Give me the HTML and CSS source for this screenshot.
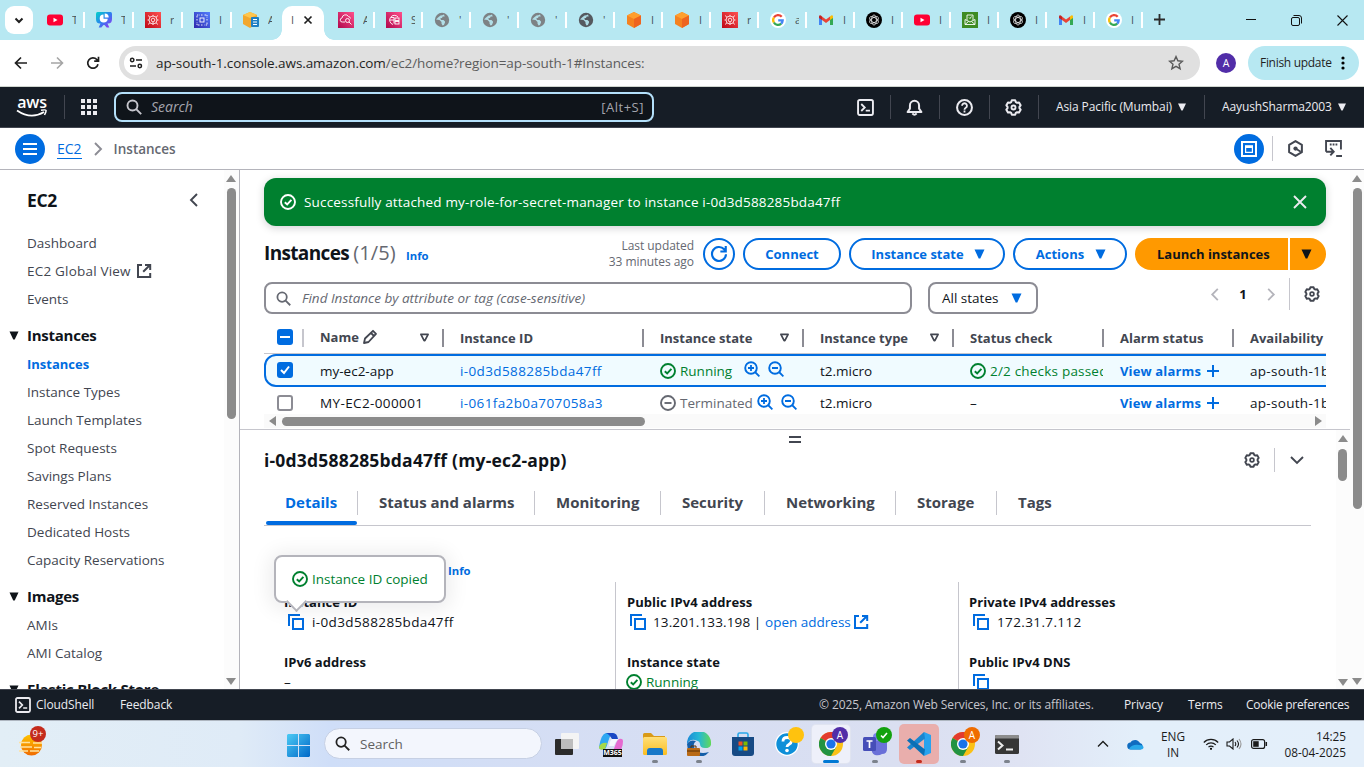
FILE: index.html
```html
<!DOCTYPE html>
<html lang="en">
<head>
<meta charset="utf-8">
<title>Instances | EC2 | ap-south-1</title>
<link rel="stylesheet" href="styles.css">
</head>
<body>
<svg class="sprite" aria-hidden="true">
  <defs>
    <linearGradient id="gRed" x1="0" y1="1" x2="1" y2="0"><stop offset="0" stop-color="#bd0816"/><stop offset="1" stop-color="#ff5252"/></linearGradient>
    <linearGradient id="gPink" x1="0" y1="1" x2="1" y2="0"><stop offset="0" stop-color="#b0084d"/><stop offset="1" stop-color="#ff4f8b"/></linearGradient>
    <linearGradient id="gBlue" x1="0" y1="1" x2="1" y2="0"><stop offset="0" stop-color="#2e27ad"/><stop offset="1" stop-color="#527fff"/></linearGradient>
    <linearGradient id="gTeal" x1="0" y1="0" x2="1" y2="1"><stop offset="0" stop-color="#00d4c8"/><stop offset=".5" stop-color="#2c7ff0"/><stop offset="1" stop-color="#a32cf0"/></linearGradient>
    <linearGradient id="gWin" x1="0" y1="0" x2="1" y2="1"><stop offset="0" stop-color="#4ccbf5"/><stop offset="1" stop-color="#0067c7"/></linearGradient>
    <linearGradient id="gFold" x1="0" y1="0" x2="0" y2="1"><stop offset="0" stop-color="#ffdf78"/><stop offset="1" stop-color="#fbbd20"/></linearGradient>
    <linearGradient id="gEdge" x1="0" y1="0" x2="1" y2="0"><stop offset="0" stop-color="#1b8ad8"/><stop offset=".5" stop-color="#26b8d4"/><stop offset="1" stop-color="#62d957"/></linearGradient>
    <linearGradient id="gSun" x1="0" y1="0" x2="0" y2="1"><stop offset="0" stop-color="#ffc400"/><stop offset="1" stop-color="#f06a00"/></linearGradient>
  </defs>
  <symbol id="yt" viewBox="0 0 16 16"><rect y="2.5" width="16" height="11" rx="3" fill="#ff0033"/><path d="M6.5 5.8v4.4l4-2.2z" fill="#fff"/></symbol>
  <symbol id="present" viewBox="0 0 16 16"><path d="M1.500 0h13Q16 0 16 2v5q0 4.500-4 4.500h-.5l1.800 4h-2.600L8.500 13h-1l-2.200 2.500H2.700l1.800-4H4Q0 11.500 0 7V2q0-2 1.500-2z" fill="url(#gTeal)"/><path d="M7.500 2.500a4 4 0 1 0 4.200 4.200H7.500z" fill="#fff"/><path d="M8.700 1.400a4 4 0 0 1 4 4h-4z" fill="#fff"/></symbol>
  <symbol id="redsvc" viewBox="0 0 16 16"><rect width="16" height="16" fill="url(#gRed)"/><g fill="none" stroke="#fff" stroke-width=".8"><circle cx="8" cy="8" r="4"/><circle cx="8" cy="8" r="1.8"/><path d="M3 3.500l2 1.700M13 3.500l-2 1.700M3 12.500l2-1.700M13 12.500l-2-1.700M2.500 8H4M12 8h1.500M8 2.800v1.500M8 10v3"/></g></symbol>
  <symbol id="bluesvc" viewBox="0 0 16 16"><rect width="16" height="16" fill="url(#gBlue)"/><g fill="none" stroke="#fff" stroke-width=".9"><rect x="6" y="6" width="4" height="4"/><path d="M3 5.500V3h2.500M10.500 3H13v2.500M13 10.500V13h-2.500M5.500 13H3v-2.500M3 7v2M13 7v2M7 3h2M7 13h2" stroke-dasharray="1.500 .7"/></g></symbol>
  <symbol id="box" viewBox="0 0 16 16"><path d="M0 3l7-3 7 3v9l-7 4-7-4z" fill="#f2a72e"/><path d="M0 3l7 3 7-3-7-3z" fill="#ffc64d"/><rect x="8" y="5" width="8" height="10" rx="1" fill="#1d7fc4"/><path d="M10 7.500h4M10 10h4M10 12.500h4" stroke="#fff" stroke-width="1.200"/></symbol>
  <symbol id="pink1" viewBox="0 0 16 16"><rect width="16" height="16" fill="url(#gPink)"/><g fill="none" stroke="#fff" stroke-width=".9"><path d="M7 10H4.500a2 2 0 0 1-.5-4 3.500 3.500 0 0 1 6.500-1.500q2 .5 2 2"/><circle cx="9.500" cy="8.500" r="2"/><path d="M11 10l2.500 2.500"/></g></symbol>
  <symbol id="pink2" viewBox="0 0 16 16"><rect width="16" height="16" fill="url(#gPink)"/><g fill="none" stroke="#fff" stroke-width=".9"><path d="M7 12.500A4.700 4.700 0 1 1 12 5M3.500 8H8M5 5.500h3v6"/><rect x="9" y="6" width="4" height="2.500"/><rect x="9" y="9.500" width="4" height="2.500"/></g></symbol>
  <symbol id="globe" viewBox="0 0 16 16"><circle cx="8" cy="8" r="7.200" fill="currentColor"/><path d="M2 7.500l3.500.5 2 2v1.500l1 2q2-.5 2.500-3V9.500L9.500 8H7L6.300 6.300 8 6l.7-1.500h2L10 2.600q-1.500.900-3.500.9L4 5.500z" fill="#b7e8f2" opacity=".9"/></symbol>
  <symbol id="cube" viewBox="0 0 16 16"><path d="M8 0l7 3.500v8.500L8 16l-7-4V3.500z" fill="#f58220"/><path d="M1 3.500L8 0l7 3.500L8 7z" fill="#ff9f2e"/><path d="M8 7l7-3.500V12l-7 4z" fill="#ee6420"/></symbol>
  <symbol id="google" viewBox="0 0 16 16"><circle cx="8" cy="8" r="8" fill="#fff"/><g fill="none" stroke-width="2.300"><path d="M11.700 4.700A4.800 4.800 0 0 0 3.900 5.500" stroke="#ea4335"/><path d="M3.900 5.500a4.800 4.800 0 0 0 0 5" stroke="#fbbc05"/><path d="M3.900 10.500a4.800 4.800 0 0 0 7.300 1.100" stroke="#34a853"/><path d="M11.200 11.600A4.500 4.500 0 0 0 12.700 8.300H8.200" stroke="#4285f4"/></g></symbol>
  <symbol id="gmail" viewBox="0 0 16 16"><path d="M1 4.500V13h3V7z" fill="#4285f4"/><path d="M15 4.500V13h-3V7z" fill="#34a853"/><path d="M4 4.500L8 7.500l4-3V8l-4 3-4-3z" fill="#ea4335"/><path d="M1 4.500Q1.500 2 4 4.500V8L1 6z" fill="#c5221f"/><path d="M15 4.500Q14.500 2 12 4.500V8l3-2z" fill="#fbbc04"/></symbol>
  <symbol id="gpt" viewBox="0 0 16 16"><circle cx="8" cy="8" r="8" fill="#000"/><g fill="none" stroke="#fff" stroke-width=".7"><ellipse cx="8" cy="8" rx="2.400" ry="5"/><ellipse cx="8" cy="8" rx="2.400" ry="5" transform="rotate(60 8 8)"/><ellipse cx="8" cy="8" rx="2.400" ry="5" transform="rotate(120 8 8)"/></g></symbol>
  <symbol id="greensvc" viewBox="0 0 16 16"><rect width="16" height="16" fill="#3f8b24"/><g fill="none" stroke="#fff" stroke-width=".9"><path d="M5 8V3h6v5M7 5.500l1 1 1.500-2M3 7.500L8 10l5-2.500v5H3zM3 12.500L6.500 9.500M13 12.500L9.500 9.500"/></g></symbol>
  <symbol id="gear" viewBox="0 0 16 16"><path d="M6.400 1.200h3.200l.6 1.700 1.200.7 1.800-.4 1.500 2.700-1.100 1.400v1.400l1.100 1.400-1.500 2.700-1.800-.4-1.200.7-.6 1.700H6.400l-.6-1.700-1.200-.7-1.800.4-1.500-2.700 1.100-1.400V7.300L1.300 5.900l1.500-2.700 1.800.4 1.200-.7z" fill="none" stroke="currentColor" stroke-width="1.900" stroke-linejoin="round"/><circle cx="8" cy="8" r="1.900" fill="none" stroke="currentColor" stroke-width="1.700"/></symbol>
  <symbol id="shell" viewBox="0 0 16 16"><rect x="1" y="1" width="14" height="14" rx="1.500" fill="none" stroke="currentColor" stroke-width="1.800"/><path d="M4 4.700L7.300 8 4 11.300M8.200 11h4" fill="none" stroke="currentColor" stroke-width="1.700"/></symbol>
  <symbol id="search" viewBox="0 0 16 16"><circle cx="6.500" cy="6.500" r="5" fill="none" stroke="currentColor" stroke-width="1.900"/><path d="M10.200 10.200l5 5" stroke="currentColor" stroke-width="1.900"/></symbol>
  <symbol id="ok" viewBox="0 0 16 16"><circle cx="8" cy="8" r="7" fill="none" stroke="currentColor" stroke-width="1.900"/><path d="M4.800 8.200l2.400 2.300 4.200-4.600" fill="none" stroke="currentColor" stroke-width="1.900"/></symbol>
  <symbol id="stopped" viewBox="0 0 16 16"><circle cx="8" cy="8" r="7" fill="none" stroke="currentColor" stroke-width="1.900"/><path d="M4.500 8h7" stroke="currentColor" stroke-width="1.900"/></symbol>
  <symbol id="zin" viewBox="0 0 16 16"><circle cx="7" cy="7" r="5.800" fill="none" stroke="currentColor" stroke-width="1.900"/><path d="M11 11l4.400 4.400M4 7h6M7 4v6" stroke="currentColor" stroke-width="1.800"/></symbol>
  <symbol id="zout" viewBox="0 0 16 16"><circle cx="7" cy="7" r="5.800" fill="none" stroke="currentColor" stroke-width="1.900"/><path d="M11 11l4.400 4.400M4 7h6" stroke="currentColor" stroke-width="1.800"/></symbol>
  <symbol id="tri" viewBox="0 0 10 10"><path d="M0 .5h10L5.800 9.500H4.200z" fill="currentColor"/></symbol>
  <symbol id="trio" viewBox="0 0 11 10"><path d="M1.500 1.500h8L5.900 8.500h-.8z" fill="none" stroke="currentColor" stroke-width="1.900" stroke-linejoin="round"/></symbol>
  <symbol id="left" viewBox="0 0 10 16"><path d="M8 2L2 8l6 6" fill="none" stroke="currentColor" stroke-width="1.900"/></symbol>
  <symbol id="right" viewBox="0 0 10 16"><path d="M2 2l6 6-6 6" fill="none" stroke="currentColor" stroke-width="1.900"/></symbol>
  <symbol id="ext" viewBox="0 0 16 16"><path d="M6 1.900H2v12.200h12.200V10M9 1.900h5.200V7M14 2L7.200 8.800" fill="none" stroke="currentColor" stroke-width="2"/></symbol>
  <symbol id="copy" viewBox="0 0 16 16"><path d="M1 12V1h11M5 5h10v10H5z" fill="none" stroke="currentColor" stroke-width="2"/></symbol>
  <symbol id="plus" viewBox="0 0 12 12"><path d="M6 0v12M0 6h12" stroke="currentColor" stroke-width="2"/></symbol>
  <symbol id="chrome" viewBox="0 0 24 24"><circle cx="12" cy="12" r="12" fill="#fbc116"/><path d="M12 12L1.600 6A12 12 0 0 1 22.400 6H12z" fill="#e33b2e"/><path d="M1.600 6A12 12 0 0 0 12 24l5.200-9L12 12z" fill="#229342"/><circle cx="12" cy="12" r="6" fill="#fff"/><circle cx="12" cy="12" r="4.600" fill="#1a73e8"/></symbol>
</svg>

<div class="tabs">
  <div class="tabsearch"><svg width="10" height="7" viewBox="0 0 10 7"><path d="M1.500 1.500L5 5l3.500-3.500" fill="none" stroke="#1f1f1f" stroke-width="2"/></svg></div>
  <div class="tab w49"><svg><use href="#yt"/></svg><span>T</span></div>
  <div class="tab w49"><svg><use href="#present"/></svg><span>T</span></div>
  <div class="tab w49"><svg><use href="#redsvc"/></svg><span>r</span></div>
  <div class="tab w49"><svg><use href="#bluesvc"/></svg><span>I</span></div>
  <div class="tab last"><svg><use href="#box"/></svg><span>A</span></div>
  <div class="tab-active"><span>I</span><svg width="10" height="10" viewBox="0 0 10 10"><path d="M1.500 1.500l7 7M8.500 1.500l-7 7" stroke="#1f1f1f" stroke-width="1.700"/></svg></div>
  <div class="tab first"><svg><use href="#pink1"/></svg><span>A</span></div>
  <div class="tab"><svg><use href="#pink2"/></svg><span>S</span></div>
  <div class="tab g1"><svg><use href="#globe"/></svg><span>'</span></div>
  <div class="tab g1"><svg><use href="#globe"/></svg><span>'</span></div>
  <div class="tab g1"><svg><use href="#globe"/></svg><span>'</span></div>
  <div class="tab g2"><svg><use href="#globe"/></svg><span>'</span></div>
  <div class="tab"><svg><use href="#cube"/></svg><span>I</span></div>
  <div class="tab"><svg><use href="#cube"/></svg><span>I</span></div>
  <div class="tab"><svg><use href="#redsvc"/></svg><span>r</span></div>
  <div class="tab"><svg><use href="#google"/></svg><span>a</span></div>
  <div class="tab"><svg><use href="#gmail"/></svg><span>I</span></div>
  <div class="tab"><svg><use href="#gpt"/></svg><span>I</span></div>
  <div class="tab"><svg><use href="#yt"/></svg><span>I</span></div>
  <div class="tab"><svg><use href="#greensvc"/></svg><span>I</span></div>
  <div class="tab"><svg><use href="#gpt"/></svg><span>I</span></div>
  <div class="tab"><svg><use href="#gmail"/></svg><span>I</span></div>
  <div class="tab"><svg><use href="#google"/></svg><span>I</span></div>
  <svg class="newtab" width="12" height="12"><use href="#plus"/></svg>
  <div class="winctl">
    <svg width="10" height="10" viewBox="0 0 10 10"><path d="M0 4.500h10" stroke="#111"/></svg>
    <svg width="11" height="11" viewBox="0 0 11 11"><rect x=".5" y="2.500" width="8" height="8" rx="1.500" fill="none" stroke="#111"/><path d="M2.500.5H8A2.500 2.500 0 0 1 10.500 3v5.500" fill="none" stroke="#111"/></svg>
    <svg width="11" height="11" viewBox="0 0 11 11"><path d="M.5.5l10 10M10.500.5l-10 10" stroke="#111" stroke-width="1.100"/></svg>
  </div>
</div>

<div class="toolbar">
  <svg class="nav-ic" viewBox="0 0 16 16"><path d="M14 8H3M8 2.500L2.500 8 8 13.500" fill="none" stroke="#1f1f1f" stroke-width="1.700"/></svg>
  <svg class="nav-ic" viewBox="0 0 16 16"><path d="M2 8h11M8 2.500L13.500 8 8 13.500" fill="none" stroke="#a5a5a5" stroke-width="1.600"/></svg>
  <svg class="nav-ic" viewBox="0 0 16 16"><path d="M13 9.200A5.200 5.200 0 1 1 11.800 4.500l1.200 1.300M13.500 1.800v4.400H9.200" fill="none" stroke="#1f1f1f" stroke-width="1.700"/></svg>
  <div class="omni">
    <div class="site"><svg width="14" height="12" viewBox="0 0 14 12"><g fill="none" stroke="#1f1f1f" stroke-width="1.500"><circle cx="3.200" cy="3" r="1.700"/><path d="M7 3h6M1 9h6"/><circle cx="10.800" cy="9" r="1.700"/></g></svg></div>
    <div class="url">ap-south-1.console.aws.amazon.com<span>/ec2/home?region=ap-south-1#Instances:</span></div>
    <svg class="star" viewBox="0 0 16 16"><path d="M8 1.600l1.900 4.200 4.600.4-3.500 3 1.100 4.500L8 11.300l-4.100 2.400L5 9.200l-3.500-3 4.600-.4z" fill="none" stroke="#5a5a5a" stroke-width="1.400"/></svg>
  </div>
  <div class="avatar">A</div>
  <div class="finish"><span>Finish update</span><svg width="4" height="14" viewBox="0 0 4 14"><circle cx="2" cy="2" r="1.600"/><circle cx="2" cy="7" r="1.600"/><circle cx="2" cy="12" r="1.600"/></svg></div>
</div>

<header class="aws">
  <div class="logo"><span>aws</span><svg width="32" height="9" viewBox="0 0 32 9"><path d="M1 1.500Q15 11 28 3" fill="none" stroke="#fff" stroke-width="1.700"/><path d="M25 1.300q4.500-.8 5 0t-1.500 4.700" fill="none" stroke="#fff" stroke-width="1.500"/></svg></div>
  <i class="vr"></i>
  <svg class="apps" viewBox="0 0 16 16"><path d="M0 0h4v4H0zM6 0h4v4H6zM12 0h4v4h-4zM0 6h4v4H0zM6 6h4v4H6zM12 6h4v4h-4zM0 12h4v4H0zM6 12h4v4H6zM12 12h4v4h-4z" fill="#ebebf0"/></svg>
  <div class="gsearch"><svg width="16" height="16"><use href="#search"/></svg><em>Search</em><b>[Alt+S]</b></div>
  <div class="gicons">
    <div><svg><use href="#shell"/></svg></div>
    <div><svg viewBox="0 0 16 16"><path d="M1.500 12.200h13L12.300 9V6a4.300 4.300 0 0 0-8.600 0v3zM6 13.500q2 2.500 4 0" fill="none" stroke="currentColor" stroke-width="1.900" stroke-linejoin="round"/></svg></div>
    <div><svg viewBox="0 0 16 16"><circle cx="8" cy="8" r="7" fill="none" stroke="currentColor" stroke-width="1.900"/><path d="M5.700 6.300a2.300 2.300 0 1 1 3.500 2q-1.200.7-1.200 1.700M8 10.900v1.700" fill="none" stroke="currentColor" stroke-width="1.700"/></svg></div>
    <div><svg><use href="#gear"/></svg></div>
  </div>
  <div class="region"><span>Asia Pacific (Mumbai)</span><svg><use href="#tri"/></svg></div>
  <div class="user"><span>AayushSharma2003</span><svg><use href="#tri"/></svg></div>
</header>

<nav class="crumbs">
  <div class="menu"><i></i><i></i><i></i></div>
  <a>EC2</a>
  <svg class="sep" viewBox="0 0 10 16"><use href="#right"/></svg>
  <b>Instances</b>
  <div class="cright">
    <div class="round"><svg width="16" height="16" viewBox="0 0 16 16"><path d="M1 1h14v14H1z" fill="none" stroke="#fff" stroke-width="2"/><path d="M4.600 5h6.800v6.400H4.600z" fill="none" stroke="#fff" stroke-width="1.200"/><path d="M4 4.400h8v2.600H4z" fill="#fff"/></svg></div>
    <i></i>
    <svg class="hex" viewBox="0 0 16 16"><path d="M8 1l6 3.500v7L8 15l-6-3.500v-7z" fill="none" stroke="#424650" stroke-width="1.900" stroke-linejoin="round"/><circle cx="8" cy="8" r="2" fill="#424650"/><path d="M8 8l5 3" stroke="#424650" stroke-width="1.700"/></svg>
    <svg class="term" viewBox="0 0 16 16"><path d="M1 11V1h14v8M4.500 4.300h1.700M7.200 4.300h1.700M9.900 4.300h1.700M1 11h6M5 7.500L8.200 11 5 14.500M10.500 15H16" fill="none" stroke="#424650" stroke-width="1.800"/></svg>
  </div>
</nav>

<div class="main">
  <aside>
    <div class="side">
      <div class="side-title"><b>EC2</b><svg width="10" height="16"><use href="#left"/></svg></div>
      <a>Dashboard</a>
      <a class="gv">EC2 Global View <svg width="16" height="16"><use href="#ext"/></svg></a>
      <a>Events</a>
      <h3><svg><use href="#tri"/></svg>Instances</h3>
      <a class="on">Instances</a>
      <a>Instance Types</a>
      <a>Launch Templates</a>
      <a>Spot Requests</a>
      <a>Savings Plans</a>
      <a>Reserved Instances</a>
      <a>Dedicated Hosts</a>
      <a>Capacity Reservations</a>
      <h3><svg><use href="#tri"/></svg>Images</h3>
      <a>AMIs</a>
      <a>AMI Catalog</a>
      <h3><svg><use href="#tri"/></svg>Elastic Block Store</h3>
    </div>
    <div class="vbar side-bar"><i class="up"></i><i class="thumb"></i><i class="down"></i></div>
  </aside>

  <div class="content">
    <section class="top">
      <div class="flash"><svg width="16" height="16"><use href="#ok"/></svg><span>Successfully attached my-role-for-secret-manager to instance i-0d3d588285bda47ff</span><svg width="14" height="14" viewBox="0 0 14 14"><path d="M1 1l12 12M13 1L1 13" stroke="#ebebf0" stroke-width="1.900"/></svg></div>
      <div class="title">
        <h1>Instances <span>(1/5)</span></h1><a class="info">Info</a>
        <div class="updated">Last updated<br>33 minutes ago</div>
        <div class="btn refresh"><svg width="18" height="18" viewBox="0 0 16 16"><path d="M14.200 8.200A6.200 6.200 0 1 1 12.600 3.800L14 5.500M14 .8v5H9.200" fill="none" stroke="#006ce0" stroke-width="1.900"/></svg></div>
        <div class="btn connect">Connect</div>
        <div class="btn state">Instance state<svg><use href="#tri"/></svg></div>
        <div class="btn actions">Actions<svg><use href="#tri"/></svg></div>
        <div class="launch">Launch instances</div><div class="launch-more"><svg><use href="#tri"/></svg></div>
      </div>
      <div class="filter">
        <div class="find"><svg width="15" height="15"><use href="#search"/></svg><em>Find Instance by attribute or tag (case-sensitive)</em></div>
        <div class="select"><span>All states</span><svg><use href="#tri"/></svg></div>
        <div class="pager"><svg width="10" height="16"><use href="#left"/></svg><b>1</b><svg width="10" height="16"><use href="#right"/></svg><i></i><svg class="g" width="16" height="16"><use href="#gear"/></svg></div>
      </div>
      <div class="table">
        <div class="row head">
          <div><span class="cb dash"></span></div>
          <div class="nm">Name <svg class="pen" viewBox="0 0 16 16"><path d="M2 14l1-4.500L11 1.800l3 3L6.500 13zM9 4l3 3" fill="none" stroke="currentColor" stroke-width="1.800" stroke-linejoin="round"/></svg><svg class="sort"><use href="#trio"/></svg></div>
          <div>Instance ID</div>
          <div>Instance state<svg class="sort"><use href="#trio"/></svg></div>
          <div>Instance type<svg class="sort"><use href="#trio"/></svg></div>
          <div>Status check</div>
          <div>Alarm status</div>
          <div>Availability Zone</div>
        </div>
        <div class="row sel">
          <div><span class="cb"><svg viewBox="0 0 16 16"><path d="M4 8l3 3 5-6.500" fill="none" stroke="#fff" stroke-width="2"/></svg></span></div>
          <div>my-ec2-app</div>
          <div class="link wide">i-0d3d588285bda47ff</div>
          <div class="green"><svg class="st"><use href="#ok"/></svg>Running<svg class="zm z1"><use href="#zin"/></svg><svg class="zm"><use href="#zout"/></svg></div>
          <div>t2.micro</div>
          <div class="green"><svg class="st"><use href="#ok"/></svg><span class="clip">2/2 checks passed</span></div>
          <div class="alarm">View alarms<svg><use href="#plus"/></svg></div>
          <div class="az">ap-south-1b</div>
        </div>
        <div class="row r2">
          <div><span class="cb off"></span></div>
          <div class="wide">MY-EC2-000001</div>
          <div class="link wide">i-061fa2b0a707058a3</div>
          <div class="grey"><svg class="st"><use href="#stopped"/></svg>Terminated<svg class="zm z2"><use href="#zin"/></svg><svg class="zm"><use href="#zout"/></svg></div>
          <div>t2.micro</div>
          <div>–</div>
          <div class="alarm">View alarms<svg><use href="#plus"/></svg></div>
          <div class="az">ap-south-1b</div>
        </div>
        <div class="hbar"><i class="lf"></i><i class="thumb"></i><i class="rt"></i></div>
      </div>
    </section>

    <section class="panel">
      <div class="panel-body">
        <div class="grip"><i></i><i></i></div>
        <div class="ptitle"><h2>i-0d3d588285bda47ff (my-ec2-app)</h2><svg width="16" height="16"><use href="#gear"/></svg><i></i><svg width="14" height="10" viewBox="0 0 14 10"><path d="M1 2l6 6 6-6" fill="none" stroke="currentColor" stroke-width="1.900"/></svg></div>
        <div class="ptabs">
          <div class="cur">Details</div><div class="t2">Status and alarms</div><div class="t3">Monitoring</div><div class="t4">Security</div><div class="t5">Networking</div><div class="t6">Storage</div><div class="t7">Tags</div>
        </div>
        <div class="summary"><a class="info">Info</a></div>
        <div class="grid">
          <div class="gcol">
            <b>Instance ID</b><p class="cp wide"><svg><use href="#copy"/></svg>i-0d3d588285bda47ff</p>
            <b>IPv6 address</b><p>–</p>
            <div class="pop"><svg width="16" height="16"><use href="#ok"/></svg>Instance ID copied</div>
          </div>
          <div class="gcol">
            <b>Public IPv4 address</b><p class="cp ip"><svg><use href="#copy"/></svg><span>13.201.133.198 |&nbsp;</span><a class="link">open address</a><svg class="ex"><use href="#ext"/></svg></p>
            <b>Instance state</b><p class="green run"><svg><use href="#ok"/></svg>Running</p>
          </div>
          <div class="gcol">
            <b>Private IPv4 addresses</b><p class="cp wide"><svg><use href="#copy"/></svg>172.31.7.112</p>
            <b>Public IPv4 DNS</b><p class="cp"><svg><use href="#copy"/></svg></p>
          </div>
        </div>
      </div>
      <div class="vbar panel-bar"><i class="up"></i><i class="thumb"></i><i class="down"></i></div>
    </section>
  </div>
  <div class="vbar page-bar"><i class="up"></i><i class="thumb"></i><i class="down"></i></div>
</div>

<footer>
  <svg width="16" height="16"><use href="#shell"/></svg><span class="f1">CloudShell</span><span>Feedback</span>
  <div class="fr"><span class="copyr">© 2025, Amazon Web Services, Inc. or its affiliates.</span><span class="f3">Privacy</span><span class="f4">Terms</span><span class="f5">Cookie preferences</span></div>
</footer>

<div class="taskbar">
  <div class="weather"><svg width="24" height="24" viewBox="0 0 24 24"><circle cx="12.500" cy="13" r="10.500" fill="url(#gSun)"/><path d="M0 10.500h11M1 15h12M0 19h9M14 11h9M15 15.500h7M11 19h9" stroke="#ffe2a0" stroke-width="1.500"/></svg><span>9+</span></div>
  <svg class="start" width="23" height="23" viewBox="0 0 23 23"><path d="M1 0h10v11H0V1zM12 0h10l1 1v10H12zM0 12h11v11H1l-1-1zM12 12h11v10l-1 1H12z" fill="url(#gWin)"/></svg>
  <div class="tsearch"><svg width="15" height="15"><use href="#search"/></svg><span>Search</span></div>
  <div class="apps-row">
    <div><svg width="24" height="22" viewBox="0 0 24 22"><rect x="0" y="6" width="18" height="16" rx="1" fill="#2b2b2b"/><rect x="6" y="0" width="18" height="16" rx="1" fill="#f4f4f4"/><rect x="6" y="6" width="12" height="10" fill="#bdbdbd"/></svg></div>
    <div><svg width="26" height="24" viewBox="0 0 26 24"><path d="M1 15Q3 2 8 1h8q-4 1-6 9t-4 7q-5 1-5-2z" fill="#2fa8f2"/><path d="M1 15q2-5 8-4l-2 6q-6 2-6-2z" fill="#a5d84a"/><path d="M8 1h7q4 0 5 6h-6q-3-5-6-6z" fill="#1a48c4"/><path d="M25 9q0 9-6 12h-7q3-1 5-7t4-7q4-1 4 2z" fill="#e56bd0"/><path d="M14 7h7q-3 1-5 7h-5q1-6 3-7z" fill="#fff" opacity=".75"/></svg><span class="m365">M365</span></div>
    <div class="dot"><svg width="24" height="22" viewBox="0 0 24 22"><path d="M0 1.500Q0 0 1.500 0H8l3 3h11v6H0z" fill="#d99a17"/><rect y="4" width="24" height="18" rx="1.500" fill="url(#gFold)"/><path d="M4 22v-4q0-3 3-3h10q3 0 3 3v4z" fill="#1878c8"/></svg></div>
    <div class="dot"><svg width="24" height="24" viewBox="0 0 24 24"><path d="M0 12A12 12 0 0 1 24 10q1 6-6 6-5 0-5-4 0-3-5-4T0 12z" fill="url(#gEdge)"/><path d="M0 12q3-5 9-3-4 3-1 8 4 6 14 3-5 6-12 4Q0 21 0 12z" fill="#145ea8"/><rect y="16" width="13" height="8" rx="1" fill="#b96a16"/><path d="M4 16v-2h5v2M0 19h13" stroke="#5a3005" fill="none"/></svg></div>
    <div><svg width="24" height="24" viewBox="0 0 24 24"><path d="M7 6V2.500q0-1.500 1.500-1.500h7Q17 1 17 2.500V6" fill="none" stroke="#28a8ea" stroke-width="1.600"/><path d="M1 5h22v16q0 3-3 3H4q-3 0-3-3z" fill="#174a84"/><path d="M7.500 9.500h4v4h-4z" fill="#f25022"/><path d="M12.500 9.500h4v4h-4z" fill="#7fba00"/><path d="M7.500 14.500h4v4h-4z" fill="#00a4ef"/><path d="M12.500 14.500h4v4h-4z" fill="#ffb900"/></svg></div>
    <div><svg width="24" height="24" viewBox="0 0 24 24"><circle cx="12" cy="12" r="11.300" fill="#0e8fd8" stroke="#fff" stroke-width="1.200"/><path d="M8 9.500q0-4 4.200-4t4.200 3.500q0 2-2.200 3.200T12 15" fill="none" stroke="#fff" stroke-width="2.800"/><circle cx="12" cy="18.500" r="1.800" fill="#fff"/></svg><span class="badge yel"></span></div>
    <div class="active"><svg width="24" height="24"><use href="#chrome"/></svg><span class="badge pur">A</span></div>
    <div class="dot"><svg width="24" height="24" viewBox="0 0 24 24"><circle cx="14" cy="5" r="4" fill="#7b83eb"/><path d="M9 9h15v8q0 5-5 5-3 2-7 1-4-2-3-6z" fill="#6a70d8"/><rect y="5" width="13" height="14" rx="1.500" fill="#464eb8"/><path d="M3.500 9h6M6.500 9v7" stroke="#fff" stroke-width="1.700"/></svg><span class="badge grn"><svg width="8" height="7" viewBox="0 0 8 7"><path d="M1 3.500l2 2L7 1" fill="none" stroke="#fff" stroke-width="1.600"/></svg></span></div>
    <div class="red dot"><svg width="24" height="24" viewBox="0 0 24 24"><path d="M17 0l7 3v18l-7 3z" fill="#29a3ee"/><path d="M17 0L0 15.500 3 18 18 6.500z" fill="#1a86d0"/><path d="M17 24L0 8.500 3 6l15 11.500z" fill="#0b6fb5"/></svg></div>
    <div class="dot"><svg width="24" height="24"><use href="#chrome"/></svg><span class="badge org">A</span></div>
    <div class="dot"><svg width="24" height="19" viewBox="0 0 24 19"><rect width="24" height="19" rx="1.500" fill="#363636"/><path d="M0 3.500V1.500Q0 0 1.500 0h21Q24 0 24 1.500v2z" fill="#8d8d8d"/><path d="M3 6.500L7.500 10.500 3 14.500M11 14.500h7" fill="none" stroke="#eee" stroke-width="2"/></svg></div>
  </div>
  <div class="tray">
    <svg class="chev" width="12" height="8" viewBox="0 0 12 8"><path d="M1 6.500l5-5 5 5" fill="none" stroke="#1b1b1b" stroke-width="1.300"/></svg>
    <svg class="cloud" width="17" height="11" viewBox="0 0 17 11"><path d="M4 10.500a3.500 3.500 0 0 1-.5-7A5.500 5.500 0 0 1 13 4a3.400 3.400 0 0 1 .5 6.500z" fill="#0f6cc0"/><path d="M2 10Q5 5 12 6q5 0 4.500 3-1 1.500-3 1.500H4z" fill="#28a8ea"/></svg>
    <div class="lang">ENG<br>IN</div>
    <svg width="16" height="12" viewBox="0 0 16 12"><g fill="none" stroke="#1b1b1b" stroke-width="1.200"><path d="M.8 4.500a10 10 0 0 1 14.400 0M3.200 6.900a6.700 6.700 0 0 1 9.600 0M5.500 9.200a3.500 3.500 0 0 1 5 0"/></g><circle cx="8" cy="10.800" r="1.100"/></svg>
    <svg width="16" height="12" viewBox="0 0 16 12"><g fill="none" stroke="#1b1b1b" stroke-width="1.100"><path d="M1 4h2.500L7 1v10L3.500 8H1zM9 4q1.500 2 0 4M11 2.500q3 3.500 0 7"/><path d="M13 1q4 5 0 10" stroke="#999"/></g></svg>
    <svg width="17" height="10" viewBox="0 0 17 10"><rect x=".6" y=".6" width="13" height="8.800" rx="2" fill="none" stroke="#1b1b1b" stroke-width="1.200"/><rect x="2.200" y="2.200" width="5.500" height="5.600" fill="#1b1b1b"/><path d="M15.300 3v4" stroke="#1b1b1b" stroke-width="1.500"/></svg>
    <div class="clock">14:25<br>08-04-2025</div>
  </div>
</div>
</body>
</html>
```
FILE: styles.css
```css
* { box-sizing: border-box; }
body {
  margin: 0; width: 1364px; height: 767px; overflow: hidden;
  display: flex; flex-direction: column;
  font: 13.5px/20px "Open Sans", "Noto Sans", sans-serif; color: #0f141a; background: #fff;
}
svg { flex: none; display: block; }
h1, h2, h3, p { margin: 0; }
.sprite { position: absolute; width: 0; height: 0; }

/* browser tabs */
.tabs { height: 40px; flex: none; background: #b7e8f2; display: flex; }
.tabsearch { width: 28px; height: 28px; margin: 6px 3px 0 5px; border-radius: 9px; background: #fff; display: grid; place-items: center; }
.tab { width: 48px; padding: 12px 0 0 11px; display: flex; height: 28px; flex: none; position: relative; font-size: 11px; line-height: 16px; color: #46545a; }
.tab::after { content: ""; position: absolute; right: 0; top: 12px; width: 2px; height: 16px; background: #fff; }
.tab svg { width: 16px; height: 16px; }
.tab > span { margin-left: 9px; width: 4px; overflow: hidden; }
.w49 { width: 49px; }
.last { width: 50px; }
.last::after { display: none; }
.first { margin-left: 3px; }
.g1 svg { color: #7d8285; }
.g2 svg { color: #55595f; }
.tab-active { width: 42px; height: 34px; margin-top: 6px; border-radius: 10px 10px 0 0; background: #fff; display: flex; align-items: center; padding: 0 0 6px 9px; position: relative; font-size: 11px; color: #555; }
.tab-active span { width: 12px; overflow: hidden; }
.tab-active::before, .tab-active::after { content: ""; position: absolute; bottom: 0; width: 10px; height: 10px; }
.tab-active::before { left: -10px; background: radial-gradient(circle at 0 0, transparent 9.500px, #fff 10px); }
.tab-active::after { right: -10px; background: radial-gradient(circle at 100% 0, transparent 9.500px, #fff 10px); }
.newtab { margin: 14px 0 0 11px; color: #2b2b2b; width: 11px; height: 11px; }
.winctl { margin: 0 16px 0 auto; display: flex; align-items: center; gap: 35px; }

/* toolbar */
.toolbar { height: 47px; flex: none; display: flex; align-items: center; padding: 0 5px 1px 13px; border-bottom: 1px solid #d0d6cf; }
.nav-ic { width: 16px; height: 16px; margin-right: 20px; }
.omni { width: 1081px; height: 34px; margin-left: -2px; border-radius: 17px; background: #e0e0e0; display: flex; align-items: center; padding: 0 16px 0 5px; }
.site { width: 24px; height: 24px; border-radius: 50%; background: #fff; display: grid; place-items: center; margin-right: 8px; }
.url { flex: 1; font-size: 13.5px; letter-spacing: -.08px; color: #1f1f1f; }
.url span { color: #5c5c5c; }
.star { width: 16px; height: 16px; }
.avatar { width: 20px; height: 20px; margin: 0 12px 0 16px; border-radius: 50%; background: #512da8; color: #fff; font-size: 10.500px; text-align: center; }
.finish { width: 111px; height: 34px; border-radius: 17px; background: #b7e8f2; display: flex; align-items: center; justify-content: space-between; padding: 0 14px 0 12px; font-size: 12px; letter-spacing: -.3px; color: #1f1f1f; white-space: nowrap; }

/* console header */
.aws { height: 41px; flex: none; background: #161d26; border-bottom: 1px solid #424650; display: flex; align-items: center; color: #ebebf0; font-size: 12px; }
.logo { width: 32px; margin-left: 16px; height: 22px; display: flex; flex-direction: column; }
.logo span { font-size: 16px; line-height: 13px; height: 13px; text-align: center; color: #fff; letter-spacing: -.2px; font-weight: 600; }
.vr { width: 1px; height: 24px; margin: 0 16px; background: #424650; }
.apps { width: 16px; height: 16px; }
.gsearch { width: 540px; height: 30px; margin-left: 17px; border: 2px solid #b4e0fa; border-radius: 8px; background: #0f141a; display: flex; align-items: center; padding: 0 8px 0 10px; color: #c6c6cd; font-size: 14px; }
.gsearch em { margin-left: 9px; color: #a4a4ad; }
.gsearch b { margin-left: auto; font-weight: 400; font-size: 13px; color: #a4a4ad; letter-spacing: .5px; }
.gicons { display: flex; margin-left: 187px; }
.gicons div { width: 49.500px; height: 24px; border-right: 1px solid #424650; display: grid; place-items: center; }
.gicons svg { width: 17px; height: 17px; }
.region, .user { height: 24px; display: flex; align-items: center; font-weight: 500; letter-spacing: -.1px; }
.region { width: 166px; padding-left: 17px; border-right: 1px solid #424650; }
.region span { width: 122px; }
.user { padding-left: 17px; }
.user span { width: 116px; }
.region svg, .user svg { width: 8px; height: 8px; }

/* breadcrumb bar */
.crumbs { height: 42px; flex: none; border-bottom: 1px solid #b4b4bb; display: flex; align-items: center; padding: 0 22px 0 15px; }
.menu { width: 30px; height: 30px; border-radius: 50%; background: #006ce0; display: flex; flex-direction: column; align-items: center; justify-content: center; gap: 3px; }
.menu i { width: 14px; height: 2px; background: #fff; }
.crumbs a { margin-left: 12px; color: #006ce0; font-size: 14px; line-height: 19px; border-bottom: 1px solid #006ce0; }
.crumbs .sep { width: 10px; height: 16px; margin: 0 11px 0 11px; color: #8c8c94; }
.crumbs > b { color: #656871; font-weight: 600; }
.cright { margin-left: auto; display: flex; align-items: center; }
.round { width: 30px; height: 30px; border-radius: 50%; background: #006ce0; display: grid; place-items: center; }
.cright > i { width: 1px; height: 25px; background: #c6c6cd; margin: 0 14px 0 8px; }
.hex { width: 17px; height: 17px; margin-right: 21px; }
.term { width: 17px; height: 17px; }

.main { height: 519px; flex: none; display: flex; }

/* scrollbars */
.vbar { width: 14px; flex: none; background: #fcfcfc; display: flex; flex-direction: column; align-items: center; padding-right: 1px; }
.vbar .thumb { width: 9px; border-radius: 5px; background: #8b8b8b; margin-top: 4px; }
.vbar .up, .vbar .down { width: 0; height: 0; border: 5px solid transparent; }
.vbar .up { border-top: 0; border-bottom: 7px solid #8b8b8b; margin-top: 5px; }
.vbar .down { border-bottom: 0; border-top: 7px solid #8b8b8b; margin: auto 0 4px; }
.side-bar { width: 15px; }
.side-bar .thumb { height: 231px; margin-top: 6px; }
.page-bar { padding-right: 0; }
.page-bar .thumb { height: 321px; margin-top: 6px; }
.panel-bar .thumb { height: 32px; margin-top: 7px; }
.panel-bar { height: 260px; }

/* side navigation */
aside { width: 240px; flex: none; border-right: 1px solid #b4b4bb; display: flex; overflow: hidden; }
.side { width: 224px; padding-left: 27px; color: #424650; }
.side-title { display: flex; align-items: center; height: 20px; margin: 20px 25px 19px 0; justify-content: space-between; }
.side-title b { font-size: 17.500px; letter-spacing: -.3px; color: #0f141a; }
.side a { height: 28px; display: flex; align-items: center; gap: 4px; white-space: nowrap; }
.side a.gv { letter-spacing: .2px; gap: 5px; }
.side a.on { color: #006ce0; font-weight: 700; font-size: 13px; }
.side h3 { font-size: 15px; letter-spacing: -.25px; line-height: 20px; margin: 13px 0 5px -18px; display: flex; align-items: center; color: #0f141a; white-space: nowrap; }
.side a + h3 { margin-top: 12px; }
.side h3 svg { width: 10px; height: 9px; margin-right: 8px; }

/* instances list */
.content { width: 1110px; display: flex; flex-direction: column; overflow: hidden; }
.top { height: 259px; flex: none; padding: 8px 24px 0; background: #fff; }
.flash { height: 48px; border-radius: 12px; background: #00802f; color: #fff; display: flex; align-items: center; padding: 0 19px 0 16px; box-shadow: 0 2px 8px rgba(0,7,22,.18); }
.flash span { flex: 1; margin-left: 8px; font-weight: 500; white-space: nowrap; letter-spacing: .17px; }
.title { display: flex; align-items: center; height: 32px; margin-top: 12px; white-space: nowrap; }
.title h1 { font-size: 19px; letter-spacing: -.65px; width: 142px; margin-top: -2px; }
.title h1 span { font-weight: 400; font-size: 20px; color: #656871; letter-spacing: .1px; }
.info { color: #006ce0; font-weight: 700; font-size: 11.300px; }
.title .info { margin-top: 4px; }
.updated { margin-left: auto; margin-right: 9px; text-align: right; font-size: 12px; letter-spacing: -.05px; line-height: 16px; color: #656871; }
.btn { height: 32px; border: 2px solid #006ce0; border-radius: 16px; color: #006ce0; font-weight: 700; font-size: 13px; display: flex; align-items: center; justify-content: center; margin-right: 8px; }
.btn svg:not([width]), .select svg, .launch-more svg { width: 11px; height: 10px; }
.btn.refresh { width: 32px; }
.connect { width: 98px; }
.state { width: 156px; gap: 10px; padding-left: 2px; }
.actions { width: 114px; gap: 11px; padding-left: 2px; }
.launch { width: 153px; height: 32px; background: #f90; border-radius: 16px 0 0 16px; font-weight: 700; font-size: 13px; line-height: 32px; padding-left: 22px; margin-right: 2px; }
.launch-more { width: 36px; height: 32px; background: #f90; border-radius: 0 16px 16px 0; display: flex; align-items: center; padding-left: 11px; }
.filter { display: flex; margin-top: 12px; height: 32px; }
.find { width: 648px; border: 2px solid #8c8c94; border-radius: 8px; display: flex; align-items: center; padding-left: 10px; color: #656871; }
.find em { margin-left: 11px; }
.select { width: 110px; margin-left: 16px; border: 2px solid #8c8c94; border-radius: 8px; display: flex; align-items: center; padding: 0 14px 0 12px; justify-content: space-between; }
.select svg { color: #006ce0; }
.pager { margin-left: auto; margin-top: -8px; display: flex; align-items: center; color: #b4b4bb; padding-right: 6px; }
.pager svg { height: 15px; }
.pager b { color: #0f141a; font-size: 13px; width: 46px; text-align: center; }
.pager i { width: 1px; height: 32px; background: #c6c6cd; margin: 0 14px 0 13px; }
.pager .g { color: #424650; height: 16px; }

.table { overflow: hidden; width: 1062px; margin-top: 8px; }
.row { display: grid; grid-template-columns: 40px 140px 200px 160px 150px 150px 130px 140px; align-items: center; white-space: nowrap; }
.row > div { padding-left: 16px; display: flex; align-items: center; }
.row > div:first-child { padding-left: 13px; }
.head { height: 32px; font-weight: 700; font-size: 13px; color: #424650; border-bottom: 1px solid #c6c6cd; }
.head > div { position: relative; height: 18px; border-right: 2px solid #8c8c94; }
.head > div:first-child { border-color: #c6c6cd; }
.head .nm { line-height: 18px; padding-bottom: 1px; }
.sort { width: 11px; height: 9px; margin-left: auto; margin-right: 12px; }
.pen { width: 16px; height: 16px; margin-left: 3px; }
.cb { width: 16px; height: 16px; border-radius: 3px; background: #006ce0; display: grid; place-items: center; margin-top: -2px; }
.cb svg { width: 16px; height: 16px; }
.dash::after { content: ""; width: 10px; height: 2px; background: #fff; }
.cb.off { background: #fff; border: 2px solid #8c8c94; margin-top: 0; }
.sel { height: 33px; background: #f0fbff; border: 2px solid #006ce0; border-radius: 12px 0 0 12px; width: 1112px; }
.sel > div { position: relative; left: -2px; }
.r2 { height: 27px; padding-top: 5px; }
.link, .alarm { color: #006ce0; }
.wide { letter-spacing: .38px; }
.az { letter-spacing: .3px; }
.green { color: #00802f; }
.grey { color: #656871; }
.st { width: 16px; height: 16px; margin-right: 4px; }
.clip { width: 113px; overflow: hidden; letter-spacing: .2px; }
.zm { width: 16px; height: 16px; color: #006ce0; margin-left: 8px; margin-top: -3px; }
.z1 { margin-left: 12px; }
.z2 { margin-left: 4px; }
.alarm { font-weight: 700; font-size: 13px; gap: 6px; letter-spacing: .15px; }
.alarm svg { width: 12px; height: 12px; }
.hbar { height: 14px; background: #fafafa; display: flex; align-items: center; padding: 0 4px 0 5px; }
.hbar .thumb { width: 363px; height: 9px; border-radius: 5px; background: #8b8b8b; margin-left: 6px; }
.lf, .rt { border: 5px solid transparent; }
.lf { border-left: 0; border-right: 7px solid #8b8b8b; }
.rt { border-right: 0; border-left: 7px solid #8b8b8b; margin-left: auto; }

/* details panel */
.panel { flex: 1; border-top: 1px solid #c6c6cd; display: flex; }
.panel-body { width: 1096px; padding-left: 24px; overflow: hidden; height: 259px; }
.grip { width: 12px; margin: 6px 0 0 525px; display: flex; flex-direction: column; gap: 3px; }
.grip i { height: 2px; background: #424650; }
.ptitle { display: flex; align-items: center; height: 26px; margin-top: 4px; color: #424650; padding-right: 32px; }
.ptitle h2 { flex: 1; font-size: 17.500px; color: #0f141a; letter-spacing: .2px; }
.ptitle i { width: 1px; height: 24px; margin: 0 15px 0 14px; background: #c6c6cd; }
.ptabs { width: 1047px; height: 46px; margin-top: 7px; border-bottom: 1px solid #c6c6cd; display: flex; align-items: flex-start; font-size: 15px; font-weight: 700; color: #424650; white-space: nowrap; padding-top: 11px; }
.ptabs div { height: 24px; line-height: 22px; border-right: 1px solid #c6c6cd; padding-left: 21px; }
.ptabs .cur { width: 94px; color: #006ce0; position: relative; }
.cur::after { content: ""; position: absolute; left: 2px; width: 91px; top: 30px; height: 4px; border-radius: 2px; background: #006ce0; }
.t2 { width: 177px; } .t3 { width: 126px; } .t4 { width: 104px; } .t5 { width: 131px; } .t6 { width: 101px; }
.ptabs .t7 { border: 0; }
.summary { height: 56px; padding: 35px 0 0 184px; line-height: 20px; }
.summary .info { display: block; }
.grid { display: grid; grid-template-columns: 352px 343px 360px; }
.gcol { padding: 10px 0 0 20px; height: 108px; border-right: 1px solid #c6c6cd; position: relative; overflow: visible; }
.gcol + .gcol { padding-left: 11px; }
.gcol:last-child { border: 0; padding-left: 10px; }
.gcol b { display: block; font-size: 13px; letter-spacing: .04px; line-height: 21px; height: 20px; }
.gcol p { height: 20px; margin-bottom: 20px; display: flex; align-items: center; white-space: nowrap; }
.gcol p svg { width: 16px; height: 16px; }
.cp > svg:first-child { margin: 0 8px 0 4px; color: #006ce0; }
.ip > svg:first-child { margin: 0 7px 0 3px; }
.ip span { letter-spacing: .12px; }
.run { margin-left: -1px; }
.run svg { margin-right: 4px; }
.gcol p .ex { color: #006ce0; margin-left: 2px; }
.pop { position: absolute; left: 10px; top: -27px; width: 172px; height: 48px; border: 2px solid #b4b4bb; border-radius: 8px; background: #fff; color: #00802f; display: flex; align-items: center; gap: 4px; padding-left: 16px; box-shadow: 0 2px 20px 4px rgba(0,7,22,.08); white-space: nowrap; }
.pop::after { content: ""; position: absolute; left: 13px; bottom: -8px; width: 13px; height: 13px; background: #fff; border: 2px solid #b4b4bb; border-width: 0 2px 2px 0; transform: rotate(45deg); }

/* console footer */
footer { height: 32px; flex: none; background: #161d26; border-top: 1px solid #424650; border-bottom: 1px solid #aeb6c0; color: #ebebf0; display: flex; align-items: center; padding: 0 0 0 15px; font-size: 12px; letter-spacing: -.1px; font-weight: 500; white-space: nowrap; }
.f1 { margin-left: 5px; width: 84px; }
.fr { margin-left: auto; display: flex; }
.copyr { width: 305px; color: #c6c6cd; }
.f3 { width: 64px; } .f4 { width: 58px; } .f5 { width: 118px; letter-spacing: -.28px; }

/* desktop taskbar */
.taskbar { height: 46px; flex: none; display: flex; align-items: center; background: linear-gradient(90deg, #e2eef6 0, #dfebf7 240px, #cfdef8 330px, #d5def4 560px, #dadff1 900px, #dfe3f3 1020px, #e3effa 1140px, #e4effa 100%); }
.weather { width: 30px; height: 30px; margin: -1px 0 0 18px; padding: 3px 0 0 1px; position: relative; }
.weather span { position: absolute; left: 12px; top: -3px; width: 16px; height: 16px; border-radius: 50%; background: #c42b1c; color: #fff; font-size: 9.500px; line-height: 15px; text-align: center; }
.start { margin-left: 239px; margin-top: 2px; }
.tsearch { width: 218px; height: 31px; margin: 0 0 1px 14px; border-radius: 16px; background: #f3f6fd; border: 1px solid #c6d0e4; display: flex; align-items: center; padding-left: 10px; gap: 10px; color: #222; }
.tsearch span { color: #616161; }
.apps-row { display: flex; margin-left: 3px; height: 46px; align-items: center; }
.apps-row > div { width: 38px; height: 38px; margin: 0 3px; display: grid; place-items: center; position: relative; border-radius: 4px; }
.apps-row .active { background: #eef0fa; box-shadow: 0 0 0 1px #e0e4f0; }
.apps-row .red { background: #e9aeac; box-shadow: 0 0 0 1px #e9aeac; }
.active::after, .dot::after { content: ""; position: absolute; bottom: 0; left: 16px; width: 6px; height: 3px; border-radius: 2px; background: #7c828c; }
.active::after { left: 11px; width: 16px; background: #0078d4; }
.red::after { background: #c42b1c; }
.badge { position: absolute; right: 2px; top: 2px; width: 16px; height: 16px; border-radius: 50%; color: #fff; font-size: 10px; line-height: 16px; text-align: center; display: grid; place-items: center; }
.yel { background: #ffc20e; } .pur { background: #512da8; } .grn { background: #13a10e; } .org { background: #ef6c00; }
.m365 { position: absolute; left: 11px; bottom: 6px; width: 19px; height: 8px; background: #111; color: #fff; font-size: 7px; line-height: 8px; text-align: center; font-weight: 700; }
.tray { display: flex; align-items: center; margin: 0 18px 0 auto; color: #1b1b1b; font-size: 11.800px; line-height: 16px; }
.cloud { margin-left: 18px; }
.lang { width: 34px; margin: 0 13px 0 12px; text-align: center; }
.tray svg + svg + svg { margin-left: 9px; }
.lang + svg + svg { margin-left: 7px; }
.clock { width: 76px; text-align: right; margin-left: 2px; }
```
